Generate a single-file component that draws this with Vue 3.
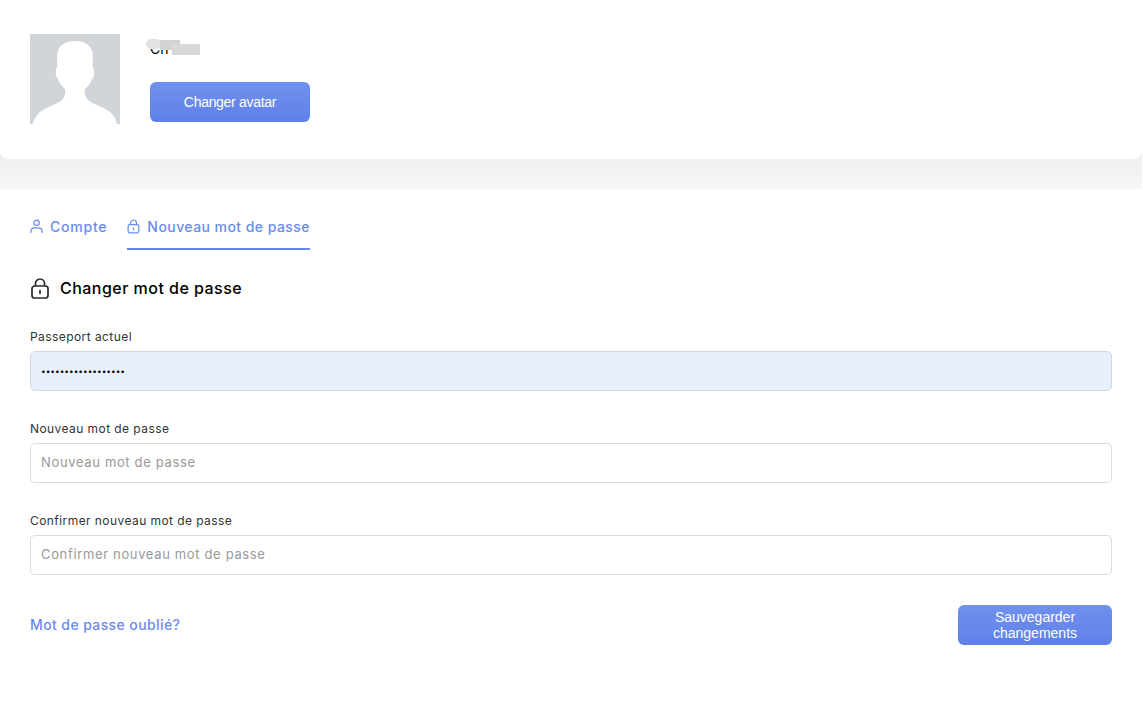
<script setup>
const tabs = [
  { id: 'account', label: 'Compte', active: false },
  { id: 'password', label: 'Nouveau mot de passe', active: true }
]
const fields = [
  { label: 'Passeport actuel', placeholder: '', type: 'password', value: 'abcdefghijklmnopqr', filled: true },
  { label: 'Nouveau mot de passe', placeholder: 'Nouveau mot de passe', type: 'password', value: '', filled: false },
  { label: 'Confirmer nouveau mot de passe', placeholder: 'Confirmer nouveau mot de passe', type: 'password', value: '', filled: false }
]
</script>

<template>
  <div class="page">
    <div class="top">
      <section class="profile">
        <svg class="avatar" viewBox="0 0 90 90" aria-hidden="true">
          <rect width="90" height="90" fill="#d1d5da" />
          <path fill="#fff" d="M3 90C4 84 8 79 13 76C20 72 27 70 32 66C35 63 36 59 35 55C32 52 29 49 28 45C26 44 25.5 40 26 35L27.5 33C27 27 27 22 27.5 18C29 11 36 7 45 7C54 7 61 11 62.5 18C63 22 63 27 62.5 33L64 35C64.5 40 64 44 62 45C61 49 58 52 55 55C54 59 55 63 58 66C63 70 70 72 77 76C82 79 86 84 87 90Z" />
        </svg>
        <div class="identity">
          <div class="name-wrap">
            <span class="name">Ch</span>
            <span class="smudge smudge-a"></span>
            <span class="smudge smudge-b"></span>
            <span class="smudge smudge-c"></span>
          </div>
          <button class="btn avatar-btn" type="button">Changer avatar</button>
        </div>
      </section>
    </div>
    <main class="content">
      <nav class="tabs">
        <a v-for="tab in tabs" :key="tab.id" class="tab" :class="{ active: tab.active, wide: tab.id === 'account' }">
          <svg v-if="tab.id === 'account'" class="tab-icon" viewBox="0 0 14 16" fill="none" stroke="currentColor" stroke-width="1.3" aria-hidden="true">
            <circle cx="7" cy="4" r="2.9" />
            <path d="M1 14.5V13c0-2.2 1.8-3.6 4-3.6h4c2.2 0 4 1.4 4 3.6v1.5" stroke-linecap="round" />
          </svg>
          <svg v-else class="tab-icon" viewBox="0 0 14 16" fill="none" stroke="currentColor" stroke-width="1.3" aria-hidden="true">
            <rect x="1.2" y="6" width="11.6" height="8.8" rx="2" />
            <path d="M3.8 6V4.2a3.2 3.2 0 0 1 6.4 0V6" />
            <path d="M7 9.6v1.8" stroke-linecap="round" />
          </svg>
          <span>{{ tab.label }}</span>
        </a>
      </nav>
      <h2 class="title">
        <svg class="title-icon" viewBox="0 0 18 21" fill="none" stroke="#2b2b2b" stroke-width="1.7" aria-hidden="true">
          <rect x="1" y="8" width="16" height="12" rx="2.6" />
          <path d="M4.5 8V5.5a4.5 4.5 0 0 1 9 0V8" />
          <path d="M9 12.6v2.8" stroke-linecap="round" />
        </svg>
        Changer mot de passe
      </h2>
      <form class="form" @submit.prevent>
        <div v-for="field in fields" :key="field.label" class="field">
          <label class="label">{{ field.label }}</label>
          <input class="input" :class="{ filled: field.filled }" :type="field.type" :value="field.value" :placeholder="field.placeholder" />
        </div>
        <div class="actions">
          <a class="forgot">Mot de passe oublié?</a>
          <button class="btn save-btn" type="button">Sauvegarder changements</button>
        </div>
      </form>
    </main>
  </div>
</template>

<style>
html, body { margin: 0; background: #fff; }
</style>

<style scoped>
.page {
  width: 1143px;
  height: 705px;
  overflow: hidden;
  background: #fff;
  font-family: "Inter", "Liberation Sans", sans-serif;
  color: #000;
}
.top {
  width: 1142px;
  padding-bottom: 30px;
  background: linear-gradient(180deg, #eeeeee, #f6f6f6) left bottom / 100% 38px no-repeat;
}
.profile {
  box-sizing: border-box;
  height: 159px;
  padding: 34px 30px 0;
  display: flex;
  gap: 30px;
  background: #fff;
  border-radius: 0 0 8px 8px;
}
.avatar { width: 90px; height: 90px; display: block; }
.identity { width: 160px; }
.name-wrap { position: relative; height: 48px; }
.name {
  position: absolute;
  left: 0;
  top: 6px;
  font-size: 14px;
  line-height: 17px;
}
.smudge { position: absolute; }
.smudge-a { left: -4px; top: 5px; width: 15px; height: 10px; border-radius: 5px; background: #e3e3e3; }
.smudge-b { left: 10px; top: 6px; width: 20px; height: 10px; background: #d3d3d1; }
.smudge-c { left: 22px; top: 10px; width: 28px; height: 11px; background: #d8d8d6; }
.btn {
  border: 0;
  padding: 0;
  color: #fff;
  font-family: "Liberation Sans", Arial, sans-serif;
  font-size: 14px;
  line-height: 16px;
  border-radius: 6px;
  background: linear-gradient(180deg, #7191ee, #5f80e8);
}
.avatar-btn { width: 160px; height: 40px; display: block; letter-spacing: -0.3px; }
.content { padding: 0 31px 0 30px; }
.tabs { display: flex; gap: 20px; height: 61px; }
.tab {
  box-sizing: border-box;
  height: 61px;
  padding-top: 29px;
  display: flex;
  align-items: flex-start;
  gap: 7px;
  color: #6a8bee;
  font-size: 14px;
  line-height: 18px;
  font-weight: 500;
  letter-spacing: 0.44px;
  border-bottom: 2px solid transparent;
}
.tab.wide { letter-spacing: 0.78px; }
.tab.active { border-bottom-color: #6485ee; }
.tab-icon { width: 13px; height: 15px; margin-top: 1px; }
.title {
  margin: 0;
  padding-top: 28px;
  display: flex;
  align-items: center;
  gap: 11px;
  height: 21px;
  font-size: 16px;
  line-height: 21px;
  font-weight: 500;
  letter-spacing: 0.47px;
  color: #000;
}
.title-icon { width: 18px; height: 21px; margin-left: 1px; }
.form { margin-top: 29px; }
.field { height: 92px; }
.label {
  display: block;
  height: 23px;
  box-sizing: border-box;
  font-size: 12px;
  line-height: 17px;
  letter-spacing: 0.43px;
  color: #333;
}
.input {
  box-sizing: border-box;
  display: block;
  width: 100%;
  height: 40px;
  padding: 0 10px 2px;
  border: 1px solid #dbdbdb;
  border-radius: 5px;
  background: #fff;
  font-family: "Inter", "Liberation Sans", sans-serif;
  font-size: 13px;
  letter-spacing: 0.65px;
  color: #000;
  outline: none;
}
.input::placeholder { color: #999; opacity: 1; }
.input.filled {
  background: #e8f0fe;
  border-color: #d3d8e0;
  padding-bottom: 0;
  font-size: 8.3px;
  letter-spacing: 0;
}
.actions {
  margin-top: 1px;
  display: flex;
  justify-content: space-between;
  align-items: center;
}
.forgot {
  color: #6a8bee;
  font-size: 14px;
  line-height: 17px;
  padding-bottom: 2px;
  font-weight: 500;
  letter-spacing: 0.4px;
}
.save-btn { width: 154px; height: 40px; padding: 0 20px; }
</style>
